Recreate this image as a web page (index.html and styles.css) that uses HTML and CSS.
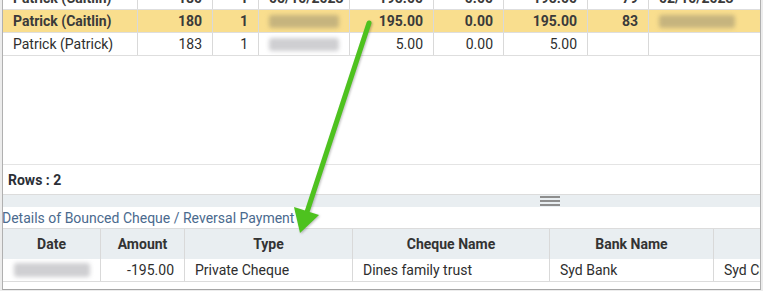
FILE: index.html
```html
<!DOCTYPE html>
<html>
<head>
<meta charset="utf-8">
<link rel="stylesheet" href="styles.css">
</head>
<body>
<div class="frame">
  <div class="top-grid">
    <div class="row bold">
      <div class="cell">Patrick (Caitlin)</div>
      <div class="cell num">180</div>
      <div class="cell num">1</div>
      <div class="cell">05/10/2023</div>
      <div class="cell num">195.00</div>
      <div class="cell num">0.00</div>
      <div class="cell num">195.00</div>
      <div class="cell num">79</div>
      <div class="cell">02/10/2023</div>
    </div>
    <div class="row bold sel">
      <div class="cell">Patrick (Caitlin)</div>
      <div class="cell num">180</div>
      <div class="cell num">1</div>
      <div class="cell"><span class="blur blur-y"></span></div>
      <div class="cell num">195.00</div>
      <div class="cell num">0.00</div>
      <div class="cell num">195.00</div>
      <div class="cell num">83</div>
      <div class="cell"><span class="blur blur-y"></span></div>
    </div>
    <div class="row">
      <div class="cell">Patrick (Patrick)</div>
      <div class="cell num">183</div>
      <div class="cell num">1</div>
      <div class="cell"><span class="blur"></span></div>
      <div class="cell num">5.00</div>
      <div class="cell num">0.00</div>
      <div class="cell num">5.00</div>
      <div class="cell num"></div>
      <div class="cell"></div>
    </div>
  </div>
  <div class="spacer"></div>
  <div class="footer">Rows : 2</div>
  <div class="splitter"><span class="handle"></span></div>
  <div class="caption">Details of Bounced Cheque / Reversal Payment</div>
  <div class="detail">
    <div class="drow head">
      <div class="dcell center">Date</div>
      <div class="dcell center">Amount</div>
      <div class="dcell center">Type</div>
      <div class="dcell center">Cheque Name</div>
      <div class="dcell center">Bank Name</div>
      <div class="dcell center">Branch</div>
    </div>
    <div class="drow">
      <div class="dcell center"><span class="blur blur-d"></span></div>
      <div class="dcell num">-195.00</div>
      <div class="dcell">Private Cheque</div>
      <div class="dcell">Dines family trust</div>
      <div class="dcell">Syd Bank</div>
      <div class="dcell">Syd City</div>
    </div>
  </div>
</div>
<svg class="arrow" width="763" height="291" viewBox="0 0 763 291">
  <g class="arrow-g">
    <line x1="369" y1="23" x2="307" y2="212" stroke="#4ec21f" stroke-width="5" stroke-linecap="round"/>
    <polygon points="300,233 319,215 294,207" fill="#4ec21f"/>
  </g>
</svg>
</body>
</html>
```

FILE: styles.css
```css
html, body {
  margin: 0;
  padding: 0;
  background: #ececec;
}
body {
  width: 763px;
  height: 291px;
  overflow: hidden;
  position: relative;
  font-family: Roboto, "Liberation Sans", sans-serif;
  font-size: 14px;
  color: #2e2e2e;
}
.frame {
  margin-left: 2px;
  width: 757px;
  height: 289px;
  background: #fff;
  border-left: 1px solid #b0b0b0;
  border-right: 1px solid #b0b0b0;
  border-bottom: 1px solid #a5a5a5;
  overflow: hidden;
  display: flex;
  flex-direction: column;
}
.top-grid {
  margin-top: -13px;
}
.row {
  display: grid;
  grid-template-columns: 135px 75px 46px 91px 84px 70px 84px 61px 1fr;
  height: 23px;
  box-sizing: border-box;
  border-bottom: 1px solid #dedede;
}
.row.bold {
  font-weight: 700;
  color: #3a3a3a;
}
.row.sel {
  background: #f9de8e;
}
.cell {
  box-sizing: border-box;
  border-right: 1px solid #d9d9d9;
  padding: 0 10px;
  display: flex;
  align-items: center;
  white-space: nowrap;
  overflow: hidden;
}
.cell:last-child {
  border-right: none;
}
.cell.num {
  justify-content: flex-end;
}
.blur {
  display: inline-block;
  width: 76px;
  height: 13px;
  background: #cfcfd2;
  filter: blur(2px);
  border-radius: 3px;
}
.blur-y {
  background: #c6b47e;
}
.blur-d {
  width: 76px;
  height: 14px;
}
.spacer {
  height: 108px;
  flex: none;
}
.footer {
  flex: none;
  height: 29px;
  border-top: 1px solid #e4e4e4;
  border-bottom: 1px solid #dcdcdc;
  padding-left: 5px;
  display: flex;
  align-items: center;
  font-weight: 700;
  color: #2b2f36;
}
.splitter {
  flex: none;
  height: 12px;
  background: #e9eef1;
  display: flex;
  padding-left: 537px;
}
.handle {
  margin-top: 1px;
  width: 20px;
  height: 10px;
  background: linear-gradient(#8e8e8e 0 2px, transparent 2px 4px, #8e8e8e 4px 6px, transparent 6px 8px, #8e8e8e 8px 10px);
}
.caption {
  flex: none;
  height: 21px;
  line-height: 21px;
  padding-top: 1px;
  box-sizing: border-box;
  color: #4a6a8e;
  white-space: nowrap;
  margin-left: -1px;
}
.detail {
  flex: none;
  width: 911px;
}
.drow {
  display: grid;
  grid-template-columns: 98px 84px 168px 197px 164px 200px;
  height: 23px;
  box-sizing: border-box;
  border-bottom: 1px solid #dcdcdc;
}
.drow.head {
  height: 31px;
  background: #e9eef1;
  border-top: 1px solid #dcdcdc;
  border-bottom: none;
  font-weight: 700;
  color: #333;
}
.dcell {
  box-sizing: border-box;
  border-right: 1px solid #d9d9d9;
  padding: 0 10px;
  display: flex;
  align-items: center;
  white-space: nowrap;
  overflow: hidden;
}
.dcell.center {
  justify-content: center;
}
.drow.head .dcell:last-child {
  color: transparent;
}
.dcell.num {
  justify-content: flex-end;
}
.arrow {
  position: absolute;
  left: 0;
  top: 0;
  pointer-events: none;
}
.arrow-g {
  filter: drop-shadow(1px 1px 1px rgba(0, 0, 0, 0.25));
}
```
